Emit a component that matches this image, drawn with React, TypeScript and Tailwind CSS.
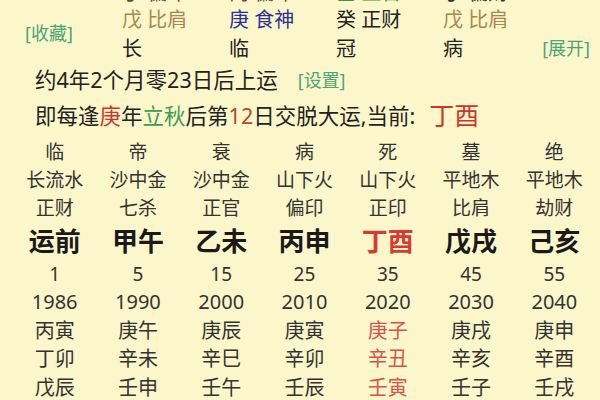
const font = { fontFamily: '"Noto Sans", "Noto Sans CJK SC", sans-serif' };

const topRows = [
  [
    { t: "丁 偏印", c: "text-[#6b4a32]" },
    { t: "丙 偏印", c: "text-[#6b4a32]" },
    { t: "壬 正官", c: "text-[#3f8f4f]" },
    { t: "丁 偏财", c: "text-[#333]" },
  ],
  [
    { t: "戊 比肩", c: "text-[#a9874f]" },
    { t: "庚 食神", c: "text-[#2b2f9c]" },
    { t: "癸 正财", c: "text-[#222]" },
    { t: "戊 比肩", c: "text-[#a9874f]" },
  ],
  [
    { t: "长", c: "text-[#222]" },
    { t: "临", c: "text-[#222]" },
    { t: "冠", c: "text-[#222]" },
    { t: "病", c: "text-[#222]" },
  ],
];

const rowH = ["h-[25px] leading-[25px]", "h-[29px] leading-[29px]", "h-[29px] leading-[29px]"];

const cols = [
  { st: "临", ny: "长流水", ss: "正财", gz: "运前", age: "1", yr: "1986", y: ["丙寅", "丁卯", "戊辰"], hot: false },
  { st: "帝", ny: "沙中金", ss: "七杀", gz: "甲午", age: "5", yr: "1990", y: ["庚午", "辛未", "壬申"], hot: false },
  { st: "衰", ny: "沙中金", ss: "正官", gz: "乙未", age: "15", yr: "2000", y: ["庚辰", "辛巳", "壬午"], hot: false },
  { st: "病", ny: "山下火", ss: "偏印", gz: "丙申", age: "25", yr: "2010", y: ["庚寅", "辛卯", "壬辰"], hot: false },
  { st: "死", ny: "山下火", ss: "正印", gz: "丁酉", age: "35", yr: "2020", y: ["庚子", "辛丑", "壬寅"], hot: true },
  { st: "墓", ny: "平地木", ss: "比肩", gz: "戊戌", age: "45", yr: "2030", y: ["庚戌", "辛亥", "壬子"], hot: false },
  { st: "绝", ny: "平地木", ss: "劫财", gz: "己亥", age: "55", yr: "2040", y: ["庚申", "辛酉", "壬戌"], hot: false },
];

export default function App() {
  return (
    <div className="w-[600px] h-[400px] overflow-hidden bg-[#fcf7cb] text-[#222]" style={font}>
      {/* Pillars (top, partly scrolled off) */}
      <div className="flex mt-[-20px] h-[83px]">
        <div className="w-[122px] shrink-0 pl-[25px] pt-[42px]">
          <span className="text-[18px] leading-[22px] text-[#4aa577] whitespace-nowrap">[收藏]</span>
        </div>
        {[0, 1, 2, 3].map((ci) => (
          <div key={ci} className={`${ci === 3 ? "w-[90px]" : "w-[107px]"} shrink-0 flex flex-col`}>
            {topRows.map((row, ri) => (
              <div key={ri} className={`${rowH[ri]} text-[20px] whitespace-nowrap ${row[ci].c}`}>
                {row[ci].t}
              </div>
            ))}
          </div>
        ))}
        <div className="flex-1 flex justify-end pr-[10px] pt-[54px]">
          <span className="text-[18px] leading-[29px] text-[#4aa577] whitespace-nowrap">[展开]</span>
        </div>
      </div>

      {/* Start info */}
      <div className="pl-[35px] h-[34px] flex items-center gap-[20px] text-[21.5px] whitespace-nowrap">
        <span>约4年2个月零23日后上运</span>
        <span className="text-[18px] text-[#4aa577]">[设置]</span>
      </div>
      <div className="pl-[35px] h-[38px] flex items-center text-[21.5px] whitespace-nowrap">
        <span>即每逢</span>
        <span className="text-[#d0352b]">庚</span>
        <span>年</span>
        <span className="text-[#3e9a57]">立秋</span>
        <span>后第</span>
        <span className="text-[#b4472e]">12</span>
        <span>日交脱大运,当前:</span>
        <span className="ml-[14px] text-[25px] text-[#d0352b]">丁酉</span>
      </div>

      {/* Da yun grid */}
      <div className="grid grid-cols-7 pl-[13px] pr-[4px] mt-[3px] text-center">
        {cols.map((c) => (
          <div key={c.gz} className="flex flex-col">
            <div className="h-[28px] leading-[28px] text-[19px] text-[#333]">{c.st}</div>
            <div className="h-[28px] leading-[28px] text-[19px] text-[#333]">{c.ny}</div>
            <div className="h-[28px] leading-[28px] text-[19px] text-[#333]">{c.ss}</div>
            <div
              className={`h-[38px] leading-[38px] text-[26px] font-bold ${c.hot ? "text-[#d63a30]" : "text-[#1a1a1a]"}`}
            >
              {c.gz}
            </div>
            <div className="h-[28px] leading-[28px] text-[19px] text-[#333]">{c.age}</div>
            <div className="h-[28.5px] leading-[28.5px] text-[20px] text-[#333]">{c.yr}</div>
            {c.y.map((y) => (
              <div
                key={y}
                className={`h-[28.5px] leading-[28.5px] text-[20px] ${c.hot ? "text-[#d9534a]" : "text-[#333]"}`}
              >
                {y}
              </div>
            ))}
          </div>
        ))}
      </div>
    </div>
  );
}
